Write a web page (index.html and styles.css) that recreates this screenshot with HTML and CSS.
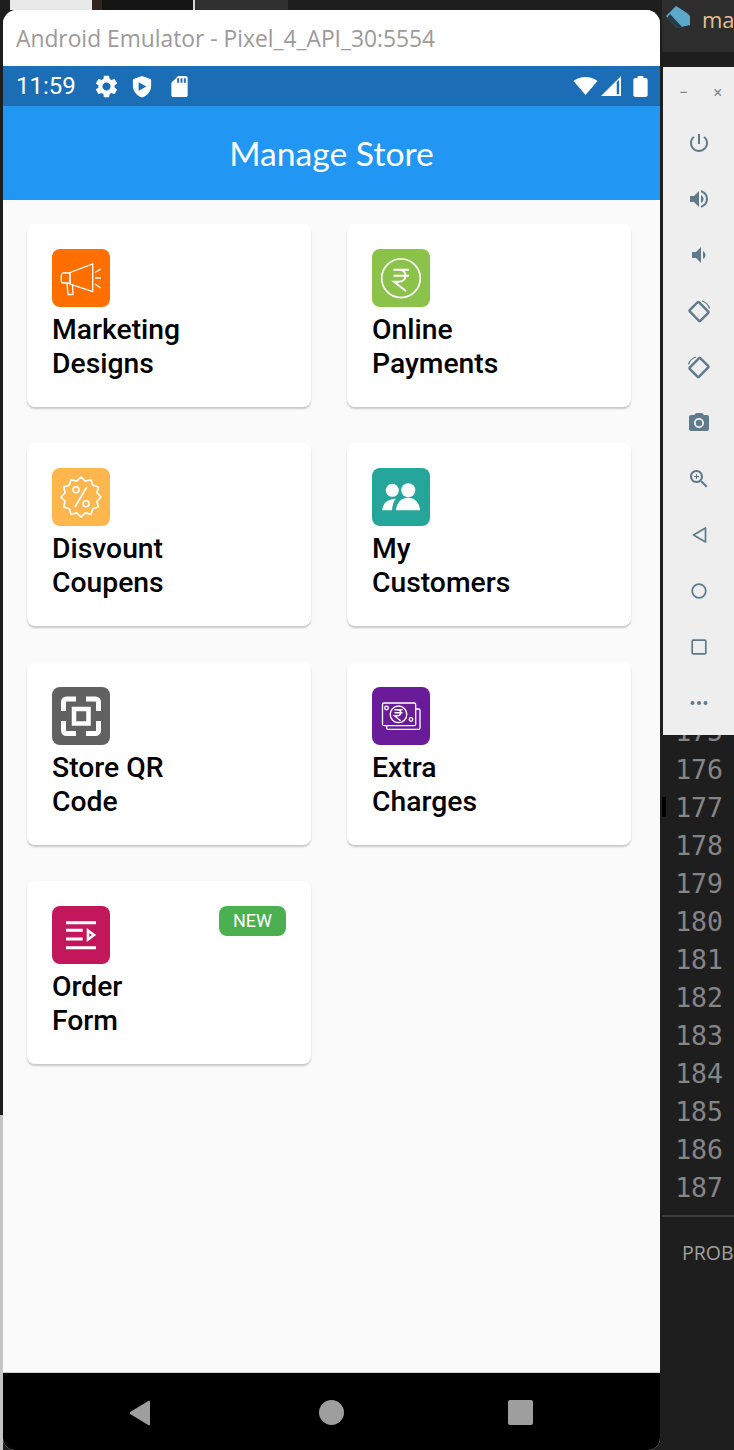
FILE: index.html
```html
<!DOCTYPE html>
<html lang="en">
<head>
  <meta charset="UTF-8">
  <meta name="viewport" content="width=device-width, initial-scale=1.0">
  <title>Manage Store</title>
  <link rel="stylesheet" href="styles.css">
</head>
<body>
  <!-- desktop behind the emulator -->
  <div class="desk-top">
    <span class="desk-thumb"></span>
    <span class="desk-brown"></span>
    <span class="desk-black"></span>
    <span class="desk-grey"></span>
  </div>
  <div class="desk-edge"></div>

  <!-- code editor window -->
  <div class="editor">
    <div class="editor-tabs">
      <svg class="dart-logo" viewBox="0 0 26 24"><path fill="#5aa9cc" d="M1 11 11 1l11 7 3 3v9l-13 3z"/><path fill="#2b3a44" d="M5 9l13 14-6 0-10-10z"/></svg>
      <span class="tab-name">ma</span>
    </div>
    <div class="gutter">
      <div>175</div><div>176</div><div class="current">177</div><div>178</div>
      <div>179</div><div>180</div><div>181</div><div>182</div><div>183</div>
      <div>184</div><div>185</div><div>186</div><div>187</div>
    </div>
    <div class="problems">PROB</div>
  </div>

  <!-- emulator side toolbar -->
  <div class="toolbar">
    <div class="toolbar-head"><span>&minus;</span><span>&times;</span></div>
    <div class="tool"><svg viewBox="0 0 24 24"><path d="M13 3h-2v10h2V3zm4.83 2.17l-1.42 1.42C17.99 7.86 19 9.81 19 12c0 3.87-3.13 7-7 7s-7-3.13-7-7c0-2.19 1.01-4.14 2.58-5.42L6.17 5.17C4.23 6.82 3 9.26 3 12c0 4.97 4.03 9 9 9s9-4.03 9-9c0-2.74-1.23-5.18-3.17-6.83z"/></svg></div>
    <div class="tool"><svg viewBox="0 0 24 24"><path d="M3 9v6h4l5 5V4L7 9H3zm13.5 3c0-1.77-1.02-3.29-2.5-4.03v8.05c1.48-.73 2.5-2.25 2.5-4.02zM14 3.23v2.06c2.89.86 5 3.54 5 6.71s-2.11 5.85-5 6.71v2.06c4.01-.91 7-4.49 7-8.77s-2.99-7.86-7-8.77z"/></svg></div>
    <div class="tool"><svg viewBox="0 0 24 24"><path d="M18.5 12c0-1.77-1.02-3.29-2.5-4.03v8.05c1.48-.73 2.5-2.25 2.5-4.02zM5 9v6h4l5 5V4L9 9H5z"/></svg></div>
    <div class="tool"><svg class="outline" viewBox="0 0 24 24"><rect x="5.500" y="5" width="13" height="15" rx="1.200" stroke-width="2.400" transform="rotate(-45 12 12.500)"/><path stroke-width="1.300" d="M15 2a11 11 0 0 1 7.500 7.500"/></svg></div>
    <div class="tool"><svg class="outline" viewBox="0 0 24 24"><rect x="5.500" y="5" width="13" height="15" rx="1.200" stroke-width="2.400" transform="rotate(45 12 12.500)"/><path stroke-width="1.300" d="M9 2a11 11 0 0 0-7.500 7.500"/></svg></div>
    <div class="tool"><svg viewBox="0 0 24 24"><circle cx="12" cy="12" r="3.200"/><path d="M9 2L7.170 4H4c-1.100 0-2 .9-2 2v12c0 1.100.9 2 2 2h16c1.100 0 2-.9 2-2V6c0-1.100-.9-2-2-2h-3.170L15 2H9zm3 15c-2.760 0-5-2.240-5-5s2.240-5 5-5 5 2.240 5 5-2.240 5-5 5z"/></svg></div>
    <div class="tool"><svg viewBox="0 0 24 24"><path d="M15.5 14h-.79l-.28-.27C15.41 12.59 16 11.11 16 9.5 16 5.91 13.09 3 9.5 3S3 5.91 3 9.5 5.91 16 9.5 16c1.61 0 3.09-.59 4.23-1.57l.27.28v.79l5 4.99L20.49 19l-4.99-5zm-6 0C7.01 14 5 11.99 5 9.5S7.01 5 9.5 5 14 7.01 14 9.5 11.99 14 9.5 14zM12 10h-2v2H9v-2H7V9h2V7h1v2h2v1z"/></svg></div>
    <div class="tool"><svg class="outline" viewBox="0 0 24 24"><path d="M18.5 5v14L6.500 12z"/></svg></div>
    <div class="tool"><svg class="outline" viewBox="0 0 24 24"><circle cx="12" cy="12" r="6.800"/></svg></div>
    <div class="tool"><svg class="outline" viewBox="0 0 24 24"><rect x="5.200" y="5.200" width="13.600" height="13.600" rx="1"/></svg></div>
    <div class="tool"><svg viewBox="0 0 24 24"><circle cx="5.500" cy="12" r="2"/><circle cx="12" cy="12" r="2"/><circle cx="18.500" cy="12" r="2"/></svg></div>
  </div>

  <!-- emulator window -->
  <div class="emulator">
    <div class="title-bar">Android Emulator - Pixel_4_API_30:5554</div>

    <div class="status-bar">
      <span class="clock">11:59</span>
      <svg class="st-gear" viewBox="0 0 24 24"><path d="M19.14 12.94c.04-.3.06-.61.06-.94 0-.32-.02-.64-.07-.94l2.03-1.58c.18-.14.23-.41.12-.61l-1.92-3.32c-.12-.22-.37-.29-.59-.22l-2.39.96c-.5-.38-1.03-.7-1.62-.94l-.36-2.54c-.04-.24-.24-.41-.48-.41h-3.84c-.24 0-.43.17-.47.41l-.36 2.54c-.59.24-1.13.57-1.62.94l-2.39-.96c-.22-.08-.47 0-.59.22L2.74 8.87c-.12.21-.08.47.12.61l2.03 1.58c-.05.3-.09.63-.09.94s.02.64.07.94l-2.03 1.58c-.18.14-.23.41-.12.61l1.92 3.32c.12.22.37.29.59.22l2.39-.96c.5.38 1.03.7 1.62.94l.36 2.54c.05.24.24.41.48.41h3.84c.24 0 .44-.17.47-.41l.36-2.54c.59-.24 1.13-.56 1.62-.94l2.39.96c.22.08.47 0 .59-.22l1.92-3.32c.12-.22.07-.47-.12-.61l-2.01-1.58zM12 15.6c-1.98 0-3.6-1.62-3.6-3.6s1.62-3.6 3.6-3.6 3.6 1.62 3.6 3.6-1.62 3.6-3.6 3.6z"/></svg>
      <svg class="st-shield" viewBox="0 0 24 24"><path d="M12 1 2.500 4.500v6.800c0 5.600 4 10.800 9.500 12.200 5.500-1.400 9.500-6.600 9.500-12.200V4.500z"/><path class="st-play" d="M8.500 7.500v9l8-4.500z"/></svg>
      <svg class="st-sd" viewBox="0 0 24 24"><path fill-rule="evenodd" d="M18 1h-8L3 8v13c0 1.100.9 2 2 2h13c1.100 0 2-.9 2-2V3c0-1.100-.9-2-2-2zM11 8H9V3.500h2zm3.500 0h-2V3.500h2zm3.500 0h-2V3.500h2z"/></svg>
      <span class="status-gap"></span>
      <svg class="st-wifi" viewBox="0 0 24 20"><path d="M12 19 24 5C23.500 4.500 18.800 1 12 1S.5 4.500 0 5z"/></svg>
      <svg class="st-signal" viewBox="0 0 22 22"><path fill-rule="evenodd" d="M0 21h21V0zM19 19h-2.500V6.500L19 4z"/></svg>
      <svg class="st-battery" viewBox="0 0 15 22"><path d="M13 2h-2.500V0h-6v2H2C1 2 0 3 0 4v16c0 1 1 2 2 2h11c1 0 2-1 2-2V4c0-1-1-2-2-2z"/></svg>
    </div>

    <header class="app-bar">Manage Store</header>

    <main class="store-grid">
      <div class="card">
        <div class="card-icon orange">
          <svg viewBox="0 0 58 58" fill="none" stroke="#fff" stroke-width="1.300">
            <path d="M18 23.500 40.700 15v27.700L18 35z"/>
            <path d="M18 24h-6.500a2.200 2.200 0 0 0-2.200 2.200v5.600a2.200 2.200 0 0 0 2.200 2.200H18z"/>
            <path d="M15 34l1 11.500h5l-.5-10"/>
            <path d="M43 23.500l5.700-3.500M43 29h6M43 35l5.700 4"/>
          </svg>
        </div>
        <div class="card-label">Marketing<br>Designs</div>
      </div>

      <div class="card">
        <div class="card-icon green">
          <svg viewBox="0 0 58 58" fill="none" stroke="#fff" stroke-width="1.700">
            <circle cx="29" cy="29.300" r="19.300"/>
            <path stroke-width="2" d="M21.500 20.700H37M21.500 26.700H37M27 20.700c4 0 6.500 2.500 6.500 6 0 3.500-3 6-7 6h-4.500L34 42"/>
          </svg>
        </div>
        <div class="card-label">Online<br>Payments</div>
      </div>

      <div class="card">
        <div class="card-icon amber">
          <svg viewBox="0 0 58 58" fill="none" stroke="#fff" stroke-width="1.600" stroke-linejoin="round">
            <polygon points="49,29 44.900,33.300 46.300,39 40.700,40.700 39,46.300 33.300,44.900 29,49 24.700,44.900 19,46.300 17.300,40.700 11.700,39 13.100,33.300 9,29 13.100,24.700 11.700,19 17.300,17.300 19,11.700 24.700,13.100 29,9 33.300,13.100 39,11.700 40.700,17.300 46.300,19 44.900,24.700"/>
            <circle cx="24" cy="21.700" r="3"/>
            <circle cx="34" cy="35.700" r="3"/>
            <path d="M34.700 19 23 39"/>
          </svg>
        </div>
        <div class="card-label">Disvount<br>Coupens</div>
      </div>

      <div class="card">
        <div class="card-icon teal">
          <svg viewBox="0 0 58 58" fill="#fff">
            <circle cx="20.300" cy="22.300" r="6.500"/>
            <circle cx="36.300" cy="22.300" r="7"/>
            <path d="M10.300 42.300c.3-7 5-11 13.500-11.500-2.500 3-3.500 7-3.800 11.500z"/>
            <path d="M24 42.300c.5-8 5.500-12.500 12-12.500s11.500 4.500 12 12.500z"/>
          </svg>
        </div>
        <div class="card-label">My<br>Customers</div>
      </div>

      <div class="card">
        <div class="card-icon grey">
          <svg viewBox="0 0 58 58" fill="none" stroke="#fff" stroke-width="5">
            <path d="M11.500 24v-9a3 3 0 0 1 3-3H24M34 12h9.500a3 3 0 0 1 3 3v9M46.500 34v9.500a3 3 0 0 1-3 3H34M24 46.500h-9.500a3 3 0 0 1-3-3V34"/>
            <rect x="22" y="22" width="14.500" height="14.500" stroke-width="4.500"/>
          </svg>
        </div>
        <div class="card-label">Store QR<br>Code</div>
      </div>

      <div class="card">
        <div class="card-icon purple">
          <svg viewBox="0 0 58 58" fill="none" stroke="#fff" stroke-width="1.300">
            <rect x="10.500" y="16" width="33.200" height="22.700" rx="1.500"/>
            <path d="M14.700 38.700v2.300a1.300 1.300 0 0 0 1.300 1.300h30.700a1.300 1.300 0 0 0 1.300-1.300V23.300a1.300 1.300 0 0 0-1.300-1.300h-3"/>
            <circle cx="26.500" cy="27.300" r="8.300"/>
            <circle cx="14.500" cy="21" r="1.800"/>
            <circle cx="39" cy="32.500" r="1.800"/>
            <path stroke-width="1.400" d="M22.500 22.700h8M22.500 25.700h8M25.300 22.700c2.400 0 3.400 1.300 3.400 3 0 1.800-1.500 3-3.700 3h-2.500l6 5"/>
          </svg>
        </div>
        <div class="card-label">Extra<br>Charges</div>
      </div>

      <div class="card">
        <div class="card-icon pink">
          <svg viewBox="0 0 58 58" fill="none" stroke="#fff" stroke-width="3">
            <path d="M14 16.700h30M14 24.300h16.700M14 33h16.700M14 41.700h30"/>
            <path stroke-width="2.600" d="M36 24.500 42 29l-6 4.500z"/>
          </svg>
        </div>
        <div class="card-label">Order<br>Form</div>
        <span class="badge">NEW</span>
      </div>
    </main>

    <nav class="nav-bar">
      <svg viewBox="0 0 24 28" class="nav-back" preserveAspectRatio="none"><path d="M22 1.500v25c0 .8-.8 1-1.300.6L2.500 15.300c-.8-.6-.8-2 0-2.600L20.700.9c.5-.4 1.300-.2 1.300.6z"/></svg>
      <span class="nav-home"></span>
      <span class="nav-recent"></span>
    </nav>
  </div>
</body>
</html>
```

FILE: styles.css
```css
* {
  box-sizing: border-box;
}

html, body {
  margin: 0;
  padding: 0;
}

body {
  position: relative;
  width: 734px;
  height: 1450px;
  overflow: hidden;
  background-color: #1e1e1e;
  font-family: 'Roboto', sans-serif;
}

/* desktop */
.desk-top {
  display: flex;
  height: 10px;
}

.desk-top span {
  display: block;
  height: 100%;
}

.desk-thumb {
  width: 82px;
  margin-left: 10px;
  background-color: #e8e8e8;
}

.desk-brown {
  width: 10px;
  background-color: #33241f;
}

.desk-black {
  width: 93px;
  background-color: #141414;
  border-right: 2px solid #d8d8d8;
}

.desk-grey {
  width: 93px;
  background-color: #303030;
}

.desk-edge {
  position: absolute;
  left: 0;
  top: 1115px;
  bottom: 0;
  width: 3px;
  background-color: #c4c4c4;
}

/* editor */
.editor {
  position: absolute;
  left: 662px;
  top: 0;
  right: 0;
  bottom: 0;
  background-color: #1e1e1e;
}

.editor-tabs {
  display: flex;
  align-items: flex-start;
  height: 52px;
  padding-top: 5px;
  background-color: #2d2d2d;
  overflow: hidden;
}

.dart-logo {
  flex: none;
  width: 26px;
  height: 24px;
  margin-left: 3px;
}

.tab-name {
  margin-left: 11px;
  font-family: 'Open Sans', sans-serif;
  font-size: 22px;
  line-height: 29px;
  color: #e2c08d;
  white-space: nowrap;
}

.gutter {
  position: relative;
  padding-top: 661px;
  padding-right: 11px;
  text-align: right;
  font-family: 'DejaVu Sans Mono', monospace;
  font-size: 26.5px;
  line-height: 38px;
  color: #858585;
}

.current::before {
  content: "";
  position: absolute;
  left: 0;
  width: 4px;
  height: 20px;
  margin-top: 8px;
  background-color: #000;
}

.problems {
  margin-top: 8px;
  height: 235px;
  padding: 22px 0 0 20px;
  border-top: 2px solid #3c3c3c;
  font-family: 'Open Sans', sans-serif;
  font-size: 19.5px;
  color: #a0a0a0;
  white-space: nowrap;
}

/* side toolbar */
.toolbar {
  position: absolute;
  left: 663px;
  top: 67px;
  width: 71px;
  height: 668px;
  background-color: #eeeeee;
}

.toolbar-head {
  display: flex;
  height: 48px;
  padding: 14px 12px 0 16px;
  justify-content: space-between;
  color: #7d8a91;
  font-size: 16px;
  line-height: 24px;
}

.tool {
  display: flex;
  align-items: center;
  justify-content: center;
  height: 56px;
}

.tool svg {
  width: 24px;
  height: 24px;
  fill: #5f7a8a;
}

.tool svg.outline {
  fill: none;
  stroke: #5f7a8a;
  stroke-width: 1.7;
  stroke-linejoin: round;
}

/* emulator */
.emulator {
  position: absolute;
  left: 3px;
  top: 10px;
  width: 657px;
  height: 1440px;
  display: flex;
  flex-direction: column;
  overflow: hidden;
  border-radius: 14px 14px 12px 12px;
  background-color: #fff;
}

.title-bar {
  flex: none;
  height: 56px;
  padding-left: 13px;
  background-color: #fff;
  font-family: 'Open Sans', sans-serif;
  font-size: 22.8px;
  line-height: 58px;
  color: #9c9a9a;
  white-space: nowrap;
}

.status-bar {
  flex: none;
  display: flex;
  align-items: center;
  height: 40px;
  padding: 0 12px 0 13px;
  background-color: #1b6db5;
}

.status-bar svg {
  display: block;
  fill: #fff;
  flex: none;
}

.clock {
  width: 77px;
  font-size: 24px;
  color: #fff;
}

.st-gear {
  width: 27px;
  height: 27px;
}

.st-shield {
  width: 24px;
  height: 23px;
  margin-left: 10px;
}

.status-bar svg .st-play {
  fill: #1b6db5;
}

.st-sd {
  width: 24px;
  height: 23px;
  margin-left: 14px;
}

.status-gap {
  flex: 1;
}

.st-wifi {
  width: 25px;
  height: 20px;
}

.st-signal {
  width: 21px;
  height: 21px;
  margin-left: 3px;
}

.st-battery {
  width: 15px;
  height: 21px;
  margin-left: 11px;
}

.app-bar {
  flex: none;
  height: 94px;
  background-color: #2196f3;
  color: #fff;
  font-family: 'Lato', sans-serif;
  font-size: 33.7px;
  line-height: 94px;
  text-align: center;
}

.store-grid {
  flex: 1;
  display: grid;
  grid-template-columns: 284px 284px;
  grid-auto-rows: 183px;
  column-gap: 36px;
  row-gap: 36px;
  align-content: start;
  padding: 24px 0 0 24px;
  background-color: #fafafa;
}

.card {
  position: relative;
  padding: 25px 25px 0;
  border-radius: 8px;
  background-color: #fff;
  box-shadow: 0 2px 2px rgba(0, 0, 0, 0.2);
}

.card-icon {
  width: 58px;
  height: 58px;
  border-radius: 8px;
}

.card-icon svg {
  display: block;
  width: 58px;
  height: 58px;
}

.orange { background-color: #ff6f00; }
.green { background-color: #8bc34a; }
.amber { background-color: #ffb74d; }
.teal { background-color: #26a69a; }
.grey { background-color: #616161; }
.purple { background-color: #6a1b9a; }
.pink { background-color: #c2185b; }

.card-label {
  margin-top: 6px;
  font-size: 28.3px;
  font-weight: 500;
  line-height: 34px;
  color: #000;
}

.badge {
  position: absolute;
  top: 25px;
  right: 25px;
  width: 67px;
  height: 30px;
  border-radius: 8px;
  background-color: #4caf50;
  color: #fff;
  font-size: 18px;
  line-height: 30px;
  text-align: center;
}

.nav-bar {
  flex: none;
  position: relative;
  height: 78px;
  border-top: 1px solid #d0d0d0;
  background-color: #000;
}

.nav-back {
  position: absolute;
  left: 125px;
  top: 27px;
  width: 24px;
  height: 26px;
  fill: #9e9e9e;
}

.nav-home {
  position: absolute;
  left: 316px;
  top: 27px;
  width: 25px;
  height: 25px;
  border-radius: 50%;
  background-color: #9e9e9e;
}

.nav-recent {
  position: absolute;
  left: 505px;
  top: 27px;
  width: 25px;
  height: 25px;
  border-radius: 2px;
  background-color: #9e9e9e;
}
```
